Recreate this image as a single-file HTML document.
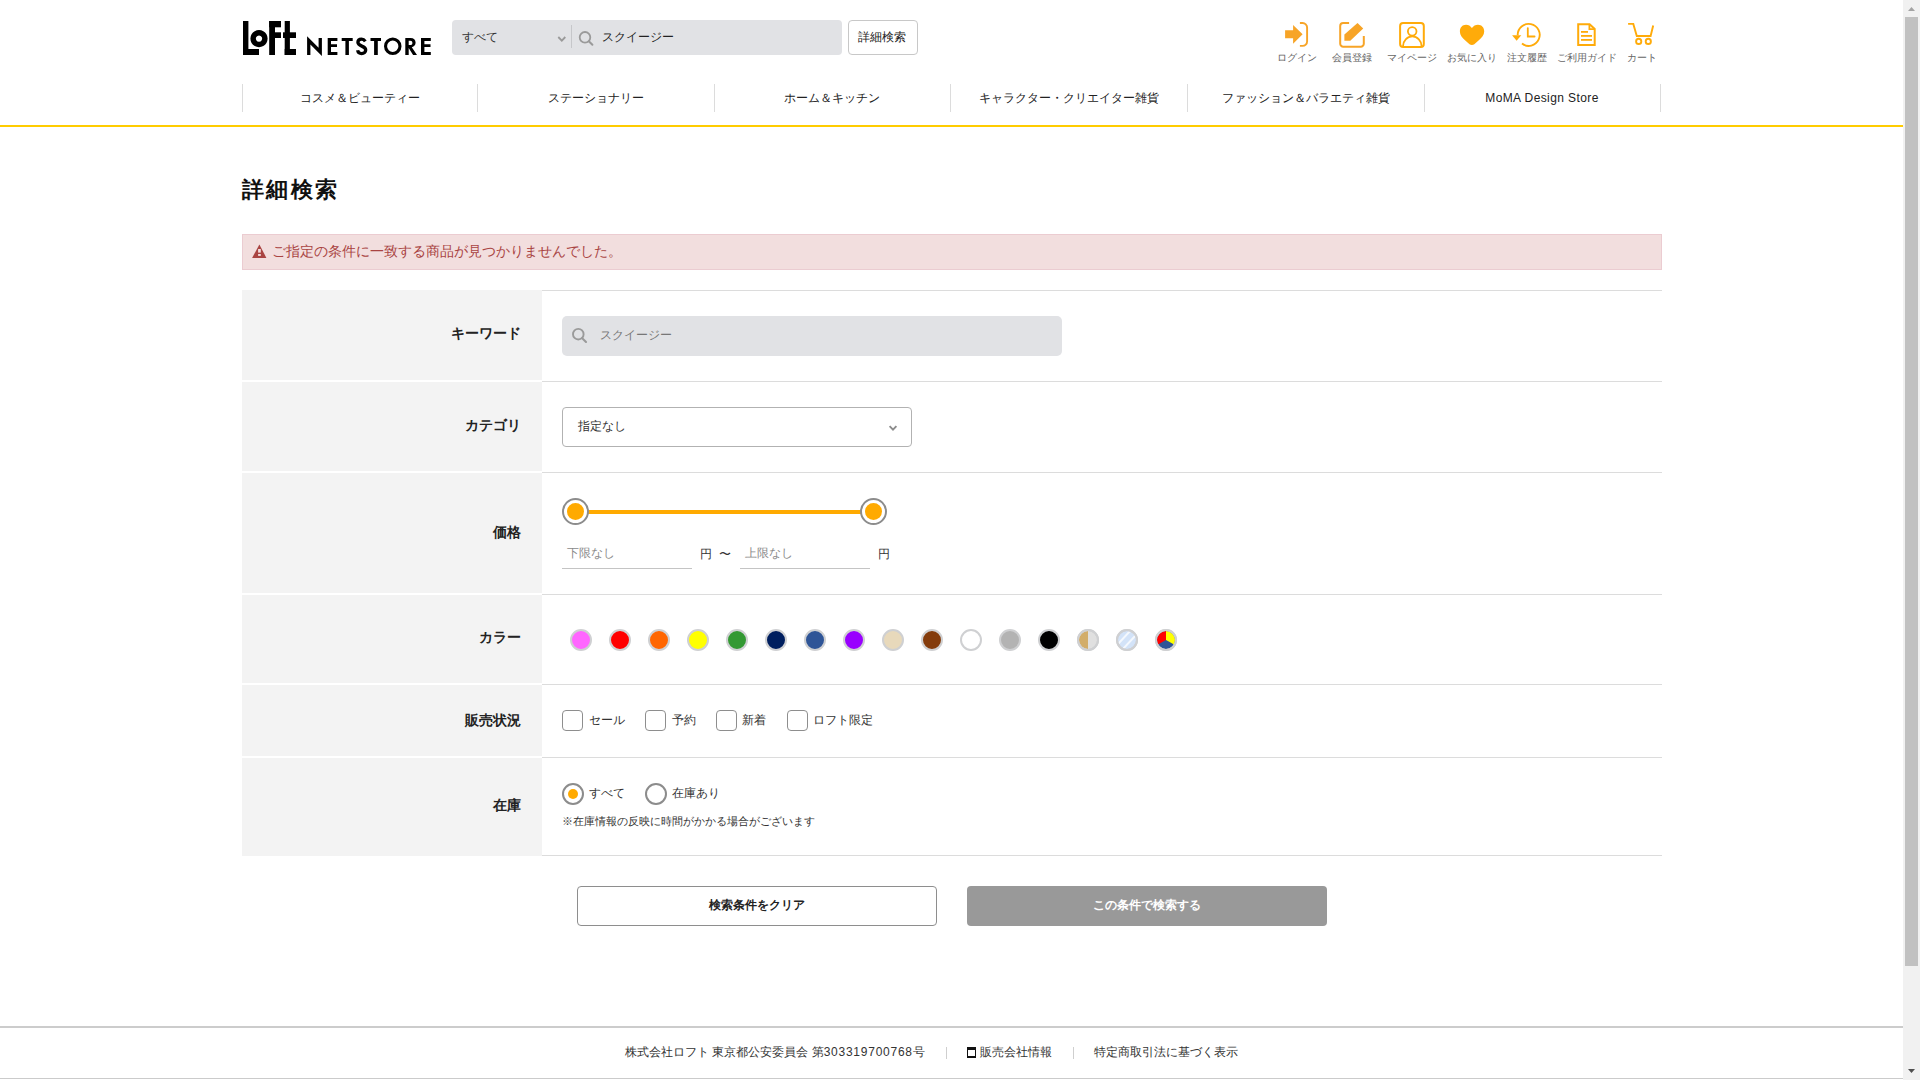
<!DOCTYPE html>
<html lang="ja">
<head>
<meta charset="utf-8">
<title>詳細検索 | ロフトネットストア</title>
<style>
html,body{margin:0;padding:0;}
body{width:1920px;height:1080px;overflow:hidden;position:relative;background:#fff;font-family:"Liberation Sans",sans-serif;color:#222;}
.a{position:absolute;}
.t{position:absolute;white-space:nowrap;line-height:1;}
#sb{position:absolute;left:1903px;top:0;width:17px;height:1080px;background:#f1f1f1;}
</style>
</head>
<body>

<!-- ================= HEADER ================= -->
<svg class="a" style="left:0;top:0" width="1903" height="120" viewBox="0 0 1903 120">
  <!-- LoFt -->
  <g fill="#000">
    <rect x="243" y="21" width="5.4" height="34"/>
    <rect x="243" y="49" width="16" height="6"/>
    <path fill-rule="evenodd" d="M259 30a8.6 8.6 0 1 0 0.01 0zM259 35.5a3.1 3.1 0 1 0 0.01 0z"/>
    <rect x="269.2" y="21" width="5.8" height="34"/>
    <rect x="269.2" y="21" width="11.8" height="6.3"/>
    <rect x="275" y="32.3" width="6" height="5.7"/>
    <rect x="284.7" y="21" width="5.2" height="34"/>
    <rect x="283" y="32.3" width="13" height="5.7"/>
    <rect x="284.7" y="49" width="11.3" height="6"/>
  </g>
  <!-- NETSTORE -->
  <g fill="#000">
    <path d="M307.1 36.2L318.6 47.8V38H321.9V55.9L310.4 44.6V55H307.1Z"/>
    <path d="M327.7 38H337.4V41H331V44.2H337V47H331V52H337.4V55H327.7Z"/>
    <path d="M341.7 38H352.7V41H348.9V55H345.4V41H341.7Z"/>
    <path d="M365.3 41.3C364.4 39.9 363.1 39.1 361.5 39.1C359.3 39.1 357.9 40.5 357.9 42.3C357.9 44.4 359.6 45.2 361.8 46.1C364 47 365.7 47.9 365.7 50C365.7 52.1 364 53.6 361.6 53.6C359.5 53.6 358 52.3 357.6 50.3" fill="none" stroke="#000" stroke-width="3.3"/>
    <path d="M370.5 38H381V41H377.8V55H374.1V41H370.5Z"/>
    <circle cx="392.75" cy="46.25" r="7.2" fill="none" stroke="#000" stroke-width="3.1"/>
    <path d="M405.3 38H410.5C413.8 38 415.6 40 415.6 42.6C415.6 45 414.2 46.8 411.8 47.3L417 55H413.1L408.7 48V55H405.3ZM408.7 40.8V45H410.3C411.6 45 412.4 44.2 412.4 42.9C412.4 41.6 411.6 40.8 410.3 40.8Z"/>
    <path d="M421 38H430.8V41H424.4V44.2H430.5V47H424.4V52H430.8V55H421Z"/>
  </g>

  <!-- search box -->
  <rect x="452" y="20" width="390" height="35" rx="4" fill="#e1e2e5"/>
  <path d="M558.3 37L561.8 40.6L565.3 37" fill="none" stroke="#9a9a9a" stroke-width="1.8"/>
  <rect x="571" y="25" width="1" height="23" fill="#c6c7ca"/>
  <circle cx="585" cy="37.3" r="5.3" fill="none" stroke="#9a9a9a" stroke-width="1.8"/>
  <path d="M588.8 41.2L592.4 44.8" stroke="#9a9a9a" stroke-width="2" stroke-linecap="round"/>
  <!-- detail button -->
  <rect x="848.5" y="20.5" width="69" height="34" rx="3.5" fill="#fff" stroke="#c8c8c8"/>

  <!-- icons -->
  <g fill="#f7a427">
    <path d="M1285.1 30.3H1293.1V25L1302.6 34.3L1293.1 43.8V38.3H1285.1Z"/>
  </g>
  <path d="M1299.9 23H1302.6A4.5 4.5 0 0 1 1307.1 27.5V41.4A4.5 4.5 0 0 1 1302.6 45.9H1299.9" fill="none" stroke="#f7a427" stroke-width="1.9"/>
  <path d="M1349.1 23H1343.2A3 3 0 0 0 1340.2 26V43.7A3 3 0 0 0 1343.2 46.7H1360.8A3 3 0 0 0 1363.8 43.7V36" fill="none" stroke="#f7a427" stroke-width="2"/>
  <path d="M1344.4 34.6L1357.5 22.9L1363.2 28.6L1350.3 40.8H1344.4Z" fill="#f7a427"/>
  <rect x="1400.1" y="23" width="23.7" height="23.9" rx="3" fill="none" stroke="#ffab0a" stroke-width="2"/>
  <circle cx="1412.2" cy="31.35" r="4.3" fill="none" stroke="#ffab0a" stroke-width="1.8"/>
  <path d="M1403 46.2A9.3 9.8 0 0 1 1421.6 46.2" fill="none" stroke="#ffab0a" stroke-width="1.8"/>
  <!-- heart -->
  <path d="M1471.9 28.1C1470.5 26 1468.5 24.8 1466 24.8C1462.3 24.8 1459.9 27.6 1459.9 31.5C1459.9 35 1462 37.5 1465 40.3L1469.5 44.2C1470.8 45.2 1473 45.2 1474.3 44.2L1478.8 40.3C1481.8 37.5 1484.2 35 1484.2 31.5C1484.2 27.6 1481.7 24.8 1478 24.8C1475.5 24.8 1473.3 26 1471.9 28.1Z" fill="#ffab0a"/>
  <!-- history -->
  <path d="M1517.7 35.2A11 11 0 1 1 1521.97 43.6" fill="none" stroke="#ffab0a" stroke-width="1.9"/>
  <path d="M1512.1 35.3H1521.3L1516.6 40.8Z" fill="#ffab0a"/>
  <path d="M1527.8 28.1V36.5H1534.6" fill="none" stroke="#ffab0a" stroke-width="1.8" stroke-linecap="round"/>
  <!-- guide -->
  <path d="M1578.2 24.2H1589.6L1594.7 29V44.9H1578.2Z" fill="none" stroke="#ffab0a" stroke-width="2"/>
  <path d="M1589.4 24.4V29.2H1594.5" fill="none" stroke="#ffab0a" stroke-width="1.8"/>
  <rect x="1581" y="31" width="7" height="1.8" fill="#ffab0a"/>
  <rect x="1581" y="35" width="11" height="1.8" fill="#ffab0a"/>
  <rect x="1581" y="39" width="11" height="1.8" fill="#ffab0a"/>
  <!-- cart -->
  <path d="M1628.1 23.9H1633.3L1636.8 36H1650.6L1653.2 25.5" fill="none" stroke="#ffab0a" stroke-width="1.9"/>
  <circle cx="1638.7" cy="41.4" r="2.6" fill="none" stroke="#ffab0a" stroke-width="1.9"/>
  <circle cx="1648.3" cy="41.4" r="2.6" fill="none" stroke="#ffab0a" stroke-width="1.9"/>

  <!-- nav separators -->
  <g fill="#dcdcdc">
    <rect x="242" y="84" width="1" height="28"/>
    <rect x="477" y="84" width="1" height="28"/>
    <rect x="714" y="84" width="1" height="28"/>
    <rect x="950" y="84" width="1" height="28"/>
    <rect x="1187" y="84" width="1" height="28"/>
    <rect x="1424" y="84" width="1" height="28"/>
    <rect x="1660" y="84" width="1" height="28"/>
  </g>
</svg>
<div class="a" style="left:0;top:125px;width:1903px;height:2px;background:#ffcc00"></div>

<!-- header texts -->
<div class="t" style="left:462px;top:31px;font-size:12px;color:#333">すべて</div>
<div class="t" style="left:602px;top:31px;font-size:12px;color:#222">スクイージー</div>
<div class="t" style="left:858px;top:31px;font-size:12px;color:#222">詳細検索</div>

<div class="t" style="left:1277px;top:53px;font-size:10px;color:#666">ログイン</div>
<div class="t" style="left:1332px;top:53px;font-size:10px;color:#666">会員登録</div>
<div class="t" style="left:1387px;top:53px;font-size:10px;color:#666">マイページ</div>
<div class="t" style="left:1447px;top:53px;font-size:10px;color:#666">お気に入り</div>
<div class="t" style="left:1507px;top:53px;font-size:10px;color:#666">注文履歴</div>
<div class="t" style="left:1557px;top:53px;font-size:10px;color:#666">ご利用ガイド</div>
<div class="t" style="left:1627px;top:53px;font-size:10px;color:#666">カート</div>

<div class="t" style="left:242px;width:236px;text-align:center;top:92px;font-size:12px;color:#222">コスメ＆ビューティー</div>
<div class="t" style="left:477px;width:237px;text-align:center;top:92px;font-size:12px;color:#222">ステーショナリー</div>
<div class="t" style="left:714px;width:236px;text-align:center;top:92px;font-size:12px;color:#222">ホーム＆キッチン</div>
<div class="t" style="left:950px;width:237px;text-align:center;top:92px;font-size:12px;color:#222">キャラクター・クリエイター雑貨</div>
<div class="t" style="left:1187px;width:237px;text-align:center;top:92px;font-size:12px;color:#222">ファッション＆バラエティ雑貨</div>
<div class="t" style="left:1424px;width:236px;text-align:center;top:92px;font-size:12px;letter-spacing:0.4px;color:#222">MoMA Design Store</div>

<!-- ================= MAIN ================= -->
<div class="t" style="left:242px;top:179px;font-size:22px;letter-spacing:2.3px;font-weight:bold;color:#111">詳細検索</div>

<div class="a" style="left:242px;top:234px;width:1418px;height:34px;background:#f2dede;border:1px solid #ebccd1"></div>
<svg class="a" style="left:252px;top:244px" width="15" height="14" viewBox="0 0 15 14">
  <path d="M7.4 0.6L14.4 13.9H0.1Z" fill="#a94442"/>
  <rect x="6.1" y="5" width="2.7" height="3.6" fill="#f2dede"/>
  <rect x="6.1" y="10" width="2.7" height="1.9" fill="#f2dede"/>
</svg>
<div class="t" style="left:272px;top:244px;font-size:14px;color:#a94442">ご指定の条件に一致する商品が見つかりませんでした。</div>

<!-- table -->
<div id="tbl">
  <div class="a" style="left:242px;top:290px;width:300px;height:90px;background:#f3f3f3"></div>
  <div class="a" style="left:242px;top:382px;width:300px;height:89px;background:#f3f3f3"></div>
  <div class="a" style="left:242px;top:473px;width:300px;height:120px;background:#f3f3f3"></div>
  <div class="a" style="left:242px;top:595px;width:300px;height:88px;background:#f3f3f3"></div>
  <div class="a" style="left:242px;top:685px;width:300px;height:71px;background:#f3f3f3"></div>
  <div class="a" style="left:242px;top:758px;width:300px;height:98px;background:#f3f3f3"></div>
  <div class="a" style="left:542px;top:290px;width:1120px;height:1px;background:#dcdcdc"></div>
  <div class="a" style="left:542px;top:381px;width:1120px;height:1px;background:#dcdcdc"></div>
  <div class="a" style="left:542px;top:472px;width:1120px;height:1px;background:#dcdcdc"></div>
  <div class="a" style="left:542px;top:594px;width:1120px;height:1px;background:#dcdcdc"></div>
  <div class="a" style="left:542px;top:684px;width:1120px;height:1px;background:#dcdcdc"></div>
  <div class="a" style="left:542px;top:757px;width:1120px;height:1px;background:#dcdcdc"></div>
  <div class="a" style="left:542px;top:855px;width:1120px;height:1px;background:#dcdcdc"></div>
</div>

<div class="t" style="right:1399px;top:326px;font-size:14px;font-weight:bold;color:#222">キーワード</div>
<div class="t" style="right:1399px;top:418px;font-size:14px;font-weight:bold;color:#222">カテゴリ</div>
<div class="t" style="right:1399px;top:525px;font-size:14px;font-weight:bold;color:#222">価格</div>
<div class="t" style="right:1399px;top:630px;font-size:14px;font-weight:bold;color:#222">カラー</div>
<div class="t" style="right:1399px;top:713px;font-size:14px;font-weight:bold;color:#222">販売状況</div>
<div class="t" style="right:1399px;top:798px;font-size:14px;font-weight:bold;color:#222">在庫</div>


<!-- keyword -->
<div class="a" style="left:562px;top:316px;width:500px;height:40px;background:#e1e2e5;border-radius:5px"></div>
<svg class="a" style="left:570px;top:326px" width="20" height="20" viewBox="0 0 20 20">
  <circle cx="8.3" cy="8.2" r="5.3" fill="none" stroke="#9a9a9a" stroke-width="1.9"/>
  <path d="M12.2 12.2L16 16" stroke="#9a9a9a" stroke-width="2.1" stroke-linecap="round"/>
</svg>
<div class="t" style="left:600px;top:329px;font-size:12px;color:#777">スクイージー</div>

<!-- category select -->
<div class="a" style="left:562px;top:407px;width:348px;height:38px;border:1px solid #b2b2b2;border-radius:4px;background:#fff"></div>
<div class="t" style="left:578px;top:420px;font-size:12px;color:#333">指定なし</div>
<svg class="a" style="left:886px;top:422px" width="14" height="12" viewBox="0 0 14 12">
  <path d="M3.6 4.2L7 7.6L10.4 4.2" fill="none" stroke="#8c8c8c" stroke-width="1.9"/>
</svg>

<!-- price slider -->
<div class="a" style="left:588px;top:510px;width:273px;height:4px;background:#ffaa00"></div>
<div class="a" style="left:562px;top:498px;width:23px;height:23px;border:2px solid #8c8c8c;border-radius:50%;background:#fff"></div>
<div class="a" style="left:567px;top:503px;width:17px;height:17px;border-radius:50%;background:#ffaa00"></div>
<div class="a" style="left:860px;top:498px;width:23px;height:23px;border:2px solid #8c8c8c;border-radius:50%;background:#fff"></div>
<div class="a" style="left:865px;top:503px;width:17px;height:17px;border-radius:50%;background:#ffaa00"></div>
<div class="a" style="left:562px;top:568px;width:130px;height:1px;background:#c4c4c4"></div>
<div class="a" style="left:740px;top:568px;width:130px;height:1px;background:#c4c4c4"></div>
<div class="t" style="left:567px;top:547px;font-size:12px;color:#8a8a8a">下限なし</div>
<div class="t" style="left:745px;top:547px;font-size:12px;color:#8a8a8a">上限なし</div>
<div class="t" style="left:700px;top:548px;font-size:12px;color:#333">円</div>
<div class="t" style="left:719px;top:548px;font-size:12px;color:#333">〜</div>
<div class="t" style="left:878px;top:548px;font-size:12px;color:#333">円</div>

<!-- colors -->
<svg class="a" style="left:560px;top:620px" width="640" height="40" viewBox="560 620 640 40">
  <defs>
    <clipPath id="c14"><circle cx="1088" cy="640" r="9"/></clipPath>
    <clipPath id="c15"><circle cx="1127" cy="640" r="9"/></clipPath>
    <clipPath id="c16"><circle cx="1166" cy="640" r="9"/></clipPath>
  </defs>
  <g stroke="#cfd0d2" stroke-width="2">
    <circle cx="581" cy="640" r="10" fill="#ff66ff"/>
    <circle cx="620" cy="640" r="10" fill="#ff0000"/>
    <circle cx="659" cy="640" r="10" fill="#ff6600"/>
    <circle cx="698" cy="640" r="10" fill="#ffff00"/>
    <circle cx="737" cy="640" r="10" fill="#339933"/>
    <circle cx="776" cy="640" r="10" fill="#001f5f"/>
    <circle cx="815" cy="640" r="10" fill="#2f5597"/>
    <circle cx="854" cy="640" r="10" fill="#9900ff"/>
    <circle cx="893" cy="640" r="10" fill="#e8d9bb"/>
    <circle cx="932" cy="640" r="10" fill="#843c0c"/>
    <circle cx="971" cy="640" r="10" fill="#ffffff"/>
    <circle cx="1010" cy="640" r="10" fill="#b3b3b3"/>
    <circle cx="1049" cy="640" r="10" fill="#000000"/>
    <circle cx="1088" cy="640" r="10" fill="#e0e0e0"/>
    <circle cx="1127" cy="640" r="10" fill="#d3e3f8"/>
    <circle cx="1166" cy="640" r="10" fill="#2f5597"/>
  </g>
  <rect x="1078" y="630" width="10" height="20" fill="#d2ad6a" clip-path="url(#c14)"/>
  <g clip-path="url(#c15)" stroke="#f4f8fd" stroke-width="2">
    <path d="M1118 644L1131 630M1122 650L1137 634"/>
  </g>
  <g clip-path="url(#c16)">
    <path d="M1166 640L1166 630L1155 630L1155 646Z" fill="#ff0000"/>
    <path d="M1166 640L1166 630L1177 630L1177 646Z" fill="#ffff00"/>
  </g>
  <circle cx="1088" cy="640" r="10" fill="none" stroke="#cfd0d2" stroke-width="2"/>
  <circle cx="1127" cy="640" r="10" fill="none" stroke="#cfd0d2" stroke-width="2"/>
  <circle cx="1166" cy="640" r="10" fill="none" stroke="#cfd0d2" stroke-width="2"/>
</svg>

<!-- checkboxes -->
<div class="a" style="left:562px;top:710px;width:19px;height:19px;border:1px solid #8e8e8e;border-radius:4px"></div>
<div class="t" style="left:589px;top:714px;font-size:12px;color:#333">セール</div>
<div class="a" style="left:645px;top:710px;width:19px;height:19px;border:1px solid #8e8e8e;border-radius:4px"></div>
<div class="t" style="left:672px;top:714px;font-size:12px;color:#333">予約</div>
<div class="a" style="left:716px;top:710px;width:19px;height:19px;border:1px solid #8e8e8e;border-radius:4px"></div>
<div class="t" style="left:742px;top:714px;font-size:12px;color:#333">新着</div>
<div class="a" style="left:787px;top:710px;width:19px;height:19px;border:1px solid #8e8e8e;border-radius:4px"></div>
<div class="t" style="left:813px;top:714px;font-size:12px;color:#333">ロフト限定</div>

<!-- radios -->
<div class="a" style="left:562px;top:783px;width:18px;height:18px;border:2px solid #8c8c8c;border-radius:50%"></div>
<div class="a" style="left:567.5px;top:788.5px;width:10.5px;height:10.5px;border-radius:50%;background:#ffaa00"></div>
<div class="t" style="left:589px;top:787px;font-size:12px;color:#333">すべて</div>
<div class="a" style="left:645px;top:783px;width:18px;height:18px;border:2px solid #8c8c8c;border-radius:50%"></div>
<div class="t" style="left:672px;top:787px;font-size:12px;color:#333">在庫あり</div>
<div class="t" style="left:562px;top:816px;font-size:11px;color:#333">※在庫情報の反映に時間がかかる場合がございます</div>

<!-- buttons -->
<div class="a" style="left:577px;top:886px;width:358px;height:38px;border:1px solid #8e8e8e;border-radius:4px;background:#fff"></div>
<div class="t" style="left:577px;width:360px;text-align:center;top:899px;font-size:12px;font-weight:bold;color:#222">検索条件をクリア</div>
<div class="a" style="left:967px;top:886px;width:360px;height:40px;border-radius:4px;background:#999"></div>
<div class="t" style="left:967px;width:360px;text-align:center;top:899px;font-size:12px;font-weight:bold;color:#fff">この条件で検索する</div>

<!-- footer -->
<div class="a" style="left:0;top:1026px;width:1903px;height:2px;background:#cccccc"></div>
<div class="a" style="left:0;top:1078px;width:1903px;height:1px;background:#cbcbcb"></div>
<div class="t" style="left:625px;top:1046px;font-size:12px;color:#333">株式会社ロフト 東京都公安委員会 第<span style="letter-spacing:0.75px">303319700768</span>号</div>
<div class="a" style="left:946px;top:1047px;width:1px;height:12px;background:#cfcfcf"></div>
<div class="a" style="left:967px;top:1047.3px;width:7.2px;height:5.4px;border:1.5px solid #111;border-top-width:3px;border-bottom-width:2px"></div>
<div class="t" style="left:980px;top:1046px;font-size:12px;color:#333">販売会社情報</div>
<div class="a" style="left:1073px;top:1047px;width:1px;height:12px;background:#cfcfcf"></div>
<div class="t" style="left:1094px;top:1046px;font-size:12px;color:#333">特定商取引法に基づく表示</div>

<!-- scrollbar -->
<div id="sb"></div>
<svg class="a" style="left:1903px;top:0" width="17" height="1080" viewBox="0 0 17 1080">
  <path d="M5 11H12L8.5 7Z" fill="#a3a3a3"/>
  <rect x="2" y="17" width="13" height="949" fill="#c1c1c1"/>
  <path d="M5 1069H12L8.5 1073Z" fill="#505050"/>
</svg>
</body>
</html>
